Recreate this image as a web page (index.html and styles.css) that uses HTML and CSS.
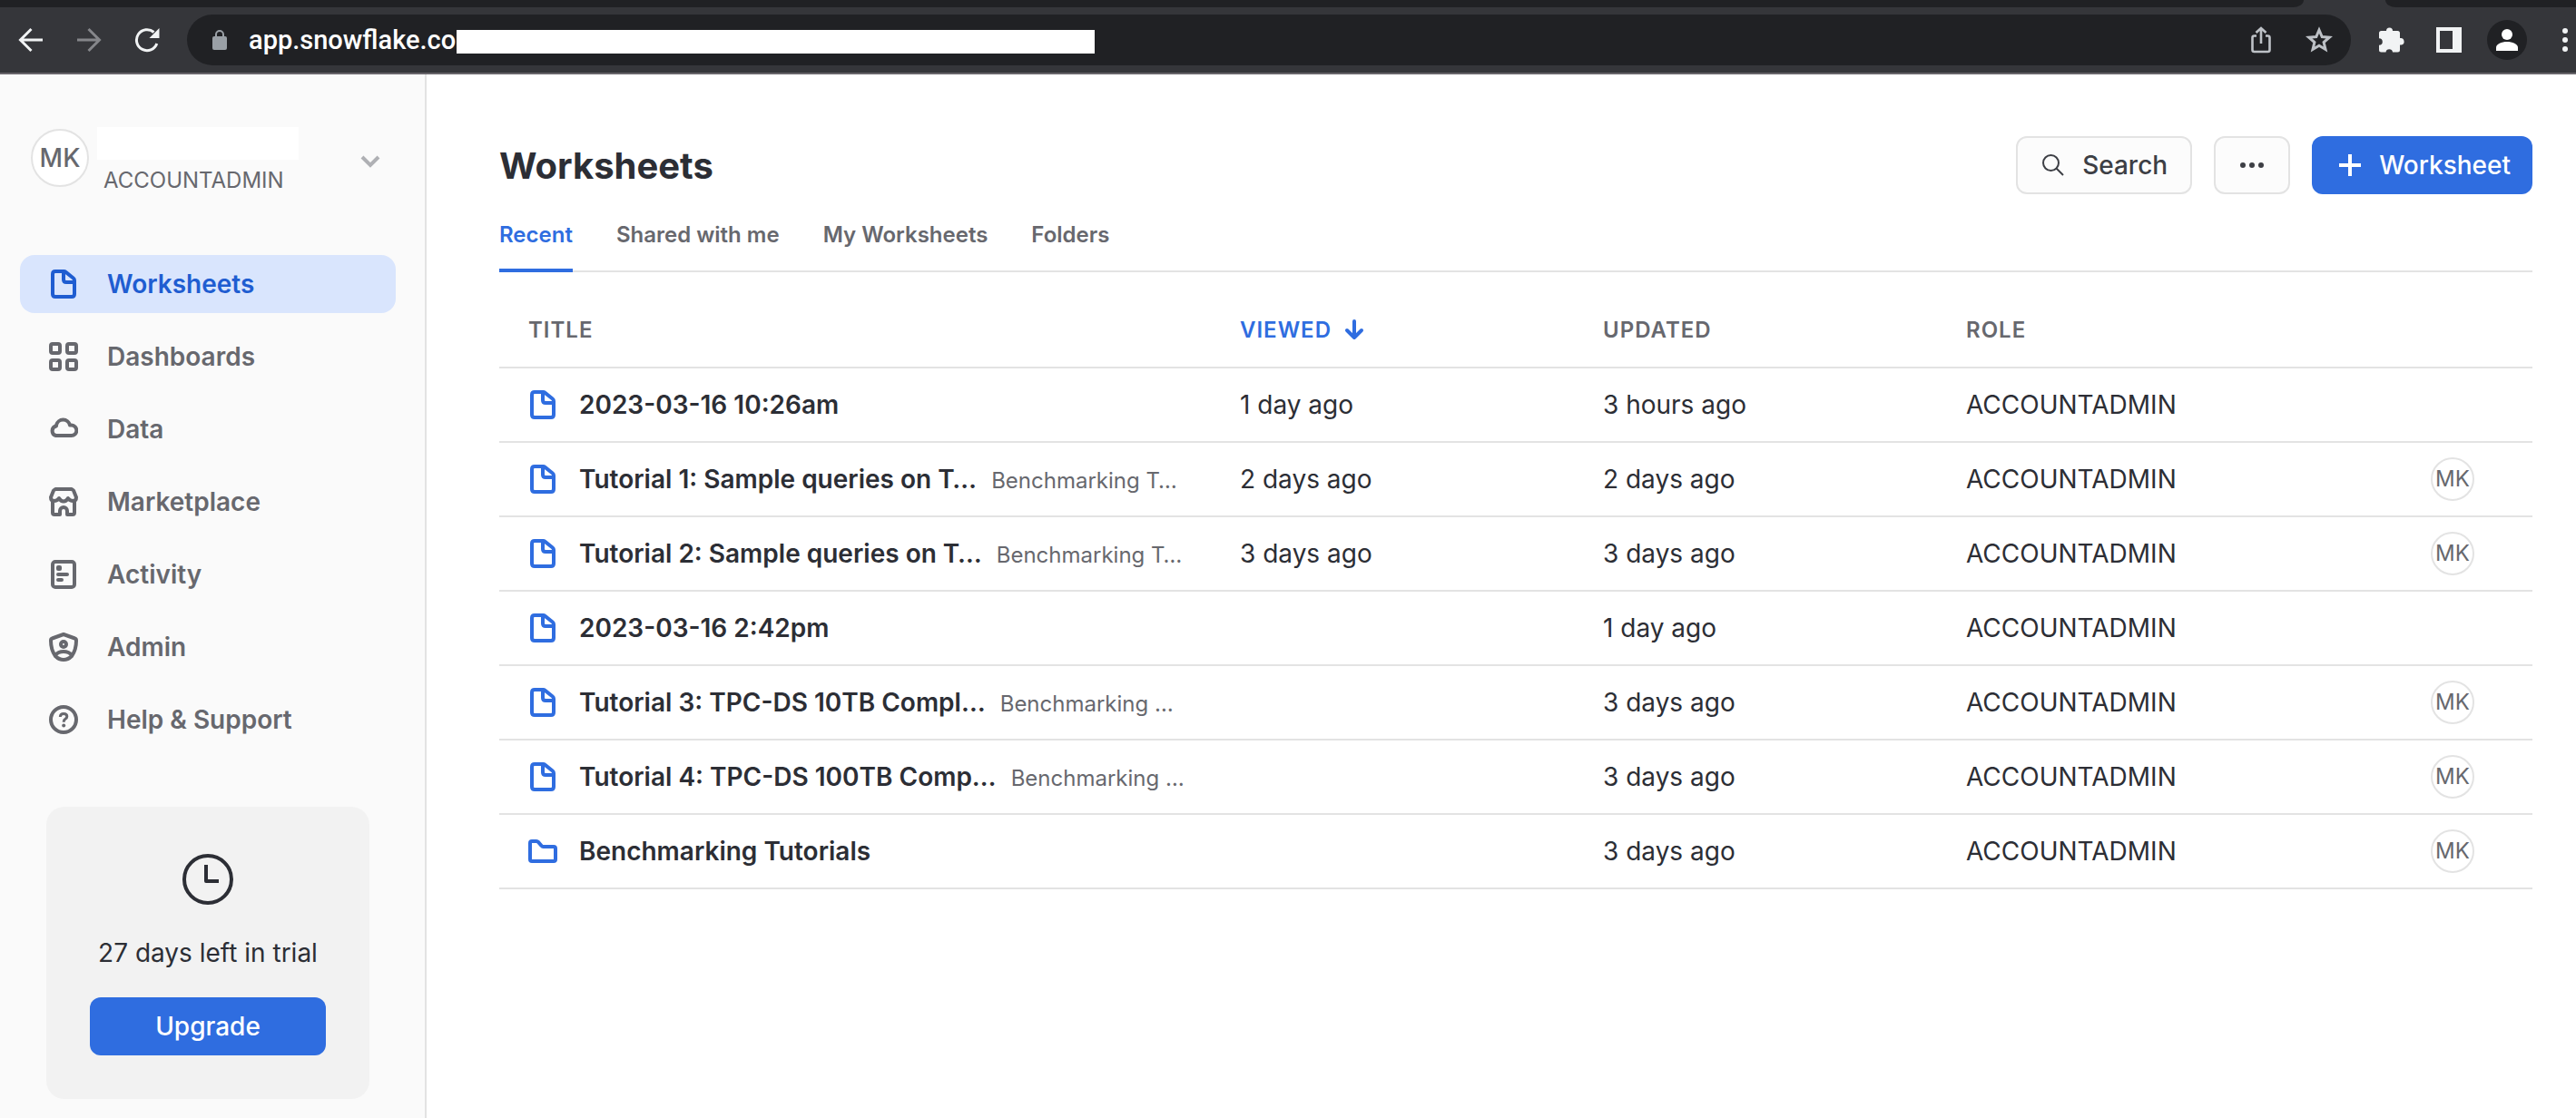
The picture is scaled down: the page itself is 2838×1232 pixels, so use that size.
FILE: index.html
```html
<!DOCTYPE html>
<html lang="en">
<head>
<meta charset="utf-8">
<title>Worksheets</title>
<link rel="stylesheet" href="styles.css">
</head>
<body>
<svg class="sprite" aria-hidden="true">
  <symbol id="file" viewBox="0 0 32 32">
    <path d="M7 2h9.500q1 0 1.700.6l8.600 6.900q1.200 1 1.200 2.500V27q0 3-3 3H7q-3 0-3-3V5q0-3 3-3zM16 2v9q0 3 3 3h9" fill="none" stroke="currentColor" stroke-width="4"/>
  </symbol>
  <symbol id="folder" viewBox="0 0 32 32">
    <path d="M4 5h5q1.200 0 2 .9l3.500 4q.8 1.100 2 1.100H28q2 0 2 2v12q0 2-2 2H4q-2 0-2-2V7q0-2 2-2z" fill="none" stroke="currentColor" stroke-width="4"/>
  </symbol>
</svg>

<header class="browser">
  <div class="tabstrip"><div class="tab-left"></div><div class="tab-right"></div></div>
  <div class="toolbar">
    <button class="tool back" aria-label="Back"><svg width="28" height="28" viewBox="0 0 28 28"><path d="M27 14H3M14.500 2 2.500 14l12 12" fill="none" stroke="currentColor" stroke-width="3"/></svg></button>
    <button class="tool forward" aria-label="Forward"><svg width="28" height="28" viewBox="0 0 28 28"><path d="M1 14h24M13.500 2l12 12-12 12" fill="none" stroke="currentColor" stroke-width="3"/></svg></button>
    <button class="tool reload" aria-label="Reload"><svg width="28" height="28" viewBox="0 0 28 28"><path d="M24.800 18A11.500 11.500 0 1 1 21.500 5.500" fill="none" stroke="currentColor" stroke-width="3"/><path d="M27.500 1v11h-11z" fill="currentColor"/></svg></button>
    <div class="omnibox">
      <svg class="lock" width="16" height="22" viewBox="0 0 16 22"><rect y="7" width="16" height="15" rx="2" fill="currentColor"/><path d="M4 8V5a4 4 0 0 1 8 0v3" fill="none" stroke="currentColor" stroke-width="2"/></svg>
      <span class="url">app.snowflake.co</span>
      <span class="url-mask"></span>
      <button class="tool share" aria-label="Share"><svg width="22" height="30" viewBox="0 0 22 30"><path d="M6 10.500H3.500a2 2 0 0 0-2 2V26a2 2 0 0 0 2 2h15a2 2 0 0 0 2-2V12.500a2 2 0 0 0-2-2H16M11 19V3M5.500 7 11 2l5.500 5" fill="none" stroke="currentColor" stroke-width="2.600"/></svg></button>
      <button class="tool star" aria-label="Bookmark"><svg width="30" height="30" viewBox="0 0 30 30"><path d="m15 4 3.200 7.500 8.100.7-6.200 5.300 1.900 8-7-4.200-7 4.200 1.900-8-6.200-5.300 8.100-.7z" fill="none" stroke="currentColor" stroke-width="3"/></svg></button>
    </div>
    <div class="extras">
      <button class="tool" aria-label="Extensions"><svg width="30" height="30" viewBox="0 0 30 30"><path d="M3.500 5H9a3.500 3.500 0 0 1 7 0h5.500a2.500 2.500 0 0 1 2.500 2.500V13a3.800 3.800 0 0 1 1.500 7.500H24v5.500a2.500 2.500 0 0 1-2.500 2.500H16a3.800 3.800 0 0 0-7.500 0h-5A2.500 2.500 0 0 1 1 26v-5.200a3.800 3.800 0 0 0 0-7.600V7.500A2.500 2.500 0 0 1 3.500 5z" fill="currentColor"/></svg></button>
      <button class="tool" aria-label="Side panel"><svg width="28" height="28" viewBox="0 0 28 28"><path d="M0 0h28v28H0zM4 4v20h14V4z" fill="currentColor" fill-rule="evenodd"/></svg></button>
      <button class="tool profile" aria-label="Profile"><svg width="24" height="24" viewBox="0 0 24 24"><circle cx="12" cy="6" r="6" fill="currentColor"/><path d="M0 24v-3.500C0 16.500 6 14 12 14s12 2.500 12 6.500V24z" fill="currentColor"/></svg></button>
      <button class="tool" aria-label="Menu"><svg width="6" height="26" viewBox="0 0 6 26"><g fill="currentColor"><circle cx="3" cy="3" r="3"/><circle cx="3" cy="13" r="3"/><circle cx="3" cy="23" r="3"/></g></svg></button>
    </div>
  </div>
</header>

<div class="app">
  <aside class="sidebar">
    <button class="account" aria-label="Account menu">
      <span class="avatar avatar-large">MK</span>
      <span class="account-text"><span class="account-name"></span><span class="account-role">ACCOUNTADMIN</span></span>
      <svg class="chevron" width="22" height="14" viewBox="0 0 22 14"><path d="m2 2 9 9 9-9" fill="none" stroke="currentColor" stroke-width="4"/></svg>
    </button>
    <nav class="nav">
      <a class="nav-item active" href="#"><svg width="32" height="32"><use href="#file"/></svg>Worksheets</a>
      <a class="nav-item" href="#"><svg width="32" height="32" viewBox="0 0 32 32"><g fill="none" stroke="currentColor" stroke-width="4"><rect x="2" y="2" width="10" height="10" rx="2"/><rect x="20" y="2" width="10" height="10" rx="2"/><rect x="2" y="20" width="10" height="10" rx="2"/><rect x="20" y="20" width="10" height="10" rx="2"/></g></svg>Dashboards</a>
      <a class="nav-item" href="#"><svg width="32" height="32" viewBox="0 0 32 32"><path d="M7.500 23h17a5.700 5.700 0 0 0 .3-11.400h-1.800A7.700 7.700 0 0 0 8 11.500v1a5.400 5.400 0 0 0-.5 10.500z" fill="none" stroke="currentColor" stroke-width="4" stroke-linejoin="round"/></svg>Data</a>
      <a class="nav-item" href="#"><svg width="32" height="32" viewBox="0 0 32 32"><path d="M4 15v13q0 2 2 2h6v-4a4 4 0 0 1 8 0v4h6q2 0 2-2V15M7 2h18l2 1.500L30 11q0 4-3.500 4-3.500 0-5.500-3-2 3.500-5 3.500t-5-3.500q-2 3-5.500 3Q2 15 2 11l3-7.500z" fill="none" stroke="currentColor" stroke-width="4" stroke-linejoin="round"/></svg>Marketplace</a>
      <a class="nav-item" href="#"><svg width="32" height="32" viewBox="0 0 32 32"><rect x="4" y="2" width="24" height="28" rx="3" fill="none" stroke="currentColor" stroke-width="4"/><rect x="8" y="6" width="6" height="6" rx="2" fill="currentColor"/><path d="M10 16h10M10 22h4" fill="none" stroke="currentColor" stroke-width="4" stroke-linecap="round"/></svg>Activity</a>
      <a class="nav-item" href="#"><svg width="32" height="32" viewBox="0 0 32 32"><g fill="none" stroke="currentColor" stroke-width="4" stroke-linejoin="round"><path d="M16 2 3.500 6.500Q2 7 2 9q0 10 5 17 4 4 9 4t9-4q5-7 5-17 0-2-1.500-2.500zM7 25q3-4 9-4t9 4"/><circle cx="16" cy="13" r="3"/></g></svg>Admin</a>
      <a class="nav-item" href="#"><svg width="32" height="32" viewBox="0 0 32 32"><circle cx="16" cy="16" r="14" fill="none" stroke="currentColor" stroke-width="4"/><path d="M12.300 13q.2-3.500 3.800-3.500 3.700 0 3.700 3 0 1.700-1.800 2.800-1.700 1-1.700 2.700v.8" fill="none" stroke="currentColor" stroke-width="3"/><circle cx="16.200" cy="22.500" r="2" fill="currentColor"/></svg>Help &amp; Support</a>
    </nav>
    <section class="trial">
      <svg width="56" height="56" viewBox="0 0 56 56"><circle cx="28" cy="28" r="26" fill="none" stroke="currentColor" stroke-width="4"/><path d="M26 12v18h14" fill="none" stroke="currentColor" stroke-width="4" stroke-linejoin="round"/></svg>
      <p>27 days left in trial</p>
      <button class="primary">Upgrade</button>
    </section>
  </aside>

  <main class="content">
    <div class="page-head">
      <h1>Worksheets</h1>
      <div class="actions">
        <button class="secondary"><svg width="24" height="24" viewBox="0 0 24 24"><circle cx="9.500" cy="9.500" r="8.500" fill="none" stroke="currentColor" stroke-width="2"/><path d="m15.500 15.500 7.500 7.500" stroke="currentColor" stroke-width="2"/></svg>Search</button>
        <button class="secondary more" aria-label="More"><svg width="26" height="6" viewBox="0 0 26 6"><g fill="currentColor"><circle cx="3" cy="3" r="3"/><circle cx="13" cy="3" r="3"/><circle cx="23" cy="3" r="3"/></g></svg></button>
        <button class="primary"><svg width="24" height="24" viewBox="0 0 24 24"><path d="M12 0v24M0 12h24" stroke="currentColor" stroke-width="4"/></svg>Worksheet</button>
      </div>
    </div>
    <nav class="tabs">
      <a class="tab active" href="#">Recent</a>
      <a class="tab" href="#">Shared with me</a>
      <a class="tab" href="#">My Worksheets</a>
      <a class="tab" href="#">Folders</a>
    </nav>
    <table class="list">
      <colgroup><col class="col-title"><col class="col-date"><col class="col-date"><col class="col-role"><col class="col-owner"></colgroup>
      <thead><tr><th>TITLE</th><th class="sorted"><span class="sort">VIEWED<svg width="22" height="24" viewBox="0 0 22 24"><path d="M11 2v18M3 12l8 8 8-8" fill="none" stroke="currentColor" stroke-width="4" stroke-linecap="round" stroke-linejoin="round"/></svg></span></th><th>UPDATED</th><th>ROLE</th><th></th></tr></thead>
      <tbody>
        <tr><td><div class="item"><svg width="32" height="32"><use href="#file"/></svg><a href="#">2023-03-16 10:26am</a></div></td><td>1 day ago</td><td>3 hours ago</td><td>ACCOUNTADMIN</td><td></td></tr>
        <tr><td><div class="item"><svg width="32" height="32"><use href="#file"/></svg><a href="#">Tutorial 1: Sample queries on T…</a><span class="parent">Benchmarking T…</span></div></td><td>2 days ago</td><td>2 days ago</td><td>ACCOUNTADMIN</td><td><span class="avatar">MK</span></td></tr>
        <tr><td><div class="item"><svg width="32" height="32"><use href="#file"/></svg><a href="#">Tutorial 2: Sample queries on T…</a><span class="parent">Benchmarking T…</span></div></td><td>3 days ago</td><td>3 days ago</td><td>ACCOUNTADMIN</td><td><span class="avatar">MK</span></td></tr>
        <tr><td><div class="item"><svg width="32" height="32"><use href="#file"/></svg><a href="#">2023-03-16 2:42pm</a></div></td><td></td><td>1 day ago</td><td>ACCOUNTADMIN</td><td></td></tr>
        <tr><td><div class="item"><svg width="32" height="32"><use href="#file"/></svg><a href="#">Tutorial 3: TPC-DS 10TB Compl…</a><span class="parent">Benchmarking …</span></div></td><td></td><td>3 days ago</td><td>ACCOUNTADMIN</td><td><span class="avatar">MK</span></td></tr>
        <tr><td><div class="item"><svg width="32" height="32"><use href="#file"/></svg><a href="#">Tutorial 4: TPC-DS 100TB Comp…</a><span class="parent">Benchmarking …</span></div></td><td></td><td>3 days ago</td><td>ACCOUNTADMIN</td><td><span class="avatar">MK</span></td></tr>
        <tr><td><div class="item"><svg width="32" height="32"><use href="#folder"/></svg><a href="#">Benchmarking Tutorials</a></div></td><td></td><td>3 days ago</td><td>ACCOUNTADMIN</td><td><span class="avatar">MK</span></td></tr>
      </tbody>
    </table>
  </main>
</div>
</body>
</html>
```
FILE: styles.css
```css
* { box-sizing: border-box; }

body {
  margin: 0;
  min-height: 100vh;
  display: flex;
  flex-direction: column;
  background: #fff;
  color: #2c2e35;
  font: 400 28px/32px Inter, "Liberation Sans", sans-serif;
}

a { color: inherit; text-decoration: none; }
button { margin: 0; padding: 0; border: 0; background: none; color: inherit; font: inherit; cursor: pointer; }
svg { display: block; flex: none; }
.sprite { position: absolute; width: 0; height: 0; }

/* Browser chrome */
.browser { background: #35363a; border-bottom: 2px solid #67646a; }
.tabstrip { display: flex; justify-content: space-between; gap: 90px; height: 8px; }
.tab-left { flex: 1; background: #202124; border-bottom-right-radius: 12px 8px; }
.tab-right { width: 210px; background: #202124; border-bottom-left-radius: 12px 8px; }
.toolbar { display: flex; align-items: center; height: 72px; padding: 0 9px 0 20px; color: #f1f3f4; }
.tool { display: flex; align-items: center; justify-content: center; }
.forward { margin-left: 36px; color: #85868a; }
.reload { margin-left: 36px; }
.omnibox { flex: 1; display: flex; align-items: center; height: 56px; margin: 0 30px; padding: 0 20px 0 28px; border-radius: 28px; background: #202124; }
.lock { color: #9aa0a6; }
.url { margin-left: 24px; color: #fff; font-family: Roboto, sans-serif; font-size: 29px; font-weight: 500; }
.url-mask { width: 703px; height: 26px; margin: 4px auto 0 1px; background: #fff; }
.share, .star { color: #bdc1c6; }
.share { margin-right: 38px; }
.extras { display: flex; align-items: center; }
.extras .tool + .tool { margin-left: 34px; }
.extras .profile.profile { width: 44px; height: 44px; margin: 0 5px 0 28px; border-radius: 50%; background: #202124; color: #fff; }

/* Sidebar */
.app { flex: 1; display: flex; }
.sidebar { flex: none; width: 470px; padding: 58px 32px 20px 22px; border-right: 2px solid #e3e3e3; background: #fafafa; color: #67686e; }
.account { display: flex; align-items: flex-start; width: 100%; height: 76px; padding: 0 17px 0 12px; text-align: left; }
.account .avatar { margin-top: 2px; }
.account-text { display: flex; flex-direction: column; flex: 1; margin-left: 9px; }
.account-name { width: 222px; height: 36px; background: #fff; }
.account-role { margin: 7px 0 0 7px; font-size: 24px; }
.chevron { margin-top: 31px; color: #afb0b4; }
.avatar { display: inline-flex; align-items: center; justify-content: center; width: 48px; height: 48px; border: 2px solid #e3e3e3; border-radius: 50%; background: #fff; color: #67686e; font-size: 24px; vertical-align: middle; }
.avatar-large { width: 64px; height: 64px; font-size: 28px; font-weight: 500; }
.nav { display: flex; flex-direction: column; gap: 16px; margin-top: 65px; }
.nav-item { display: flex; align-items: center; gap: 32px; height: 64px; padding: 0 32px; border-radius: 16px; font-weight: 600; }
.nav-item.active { background: #d9e5fd; color: #1f5dd1; }
.trial { display: flex; flex-direction: column; align-items: center; margin: 64px 29px 0; padding: 52px 48px 48px; border-radius: 20px; background: #f2f2f2; color: #2c2e35; }
.trial p { margin: 37px 0 33px; }
.trial .primary { width: 100%; }

/* Buttons */
.primary, .secondary { display: flex; align-items: center; justify-content: center; height: 64px; border-radius: 12px; }
.primary { background: #2f6de0; color: #fff; font-weight: 500; }
.secondary { border: 2px solid #e3e3e3; background: #fcfcfc; color: #3d3f45; font-weight: 500; }
.actions { display: flex; gap: 24px; }
.actions .primary { gap: 20px; padding: 0 24px 0 30px; }
.actions .secondary { gap: 20px; padding: 0 25px 0 27px; }
.actions .more { padding: 0 27px; }

/* Content */
.content { flex: 1; padding: 68px 48px 0 80px; }
.page-head { display: flex; align-items: center; justify-content: space-between; }
h1 { margin: 0; padding-top: 2px; font-size: 40px; line-height: 48px; font-weight: 700; }
.tabs { display: flex; gap: 48px; height: 86px; border-bottom: 2px solid #e3e3e3; color: #67686e; font-size: 24px; font-weight: 600; }
.tab { height: 86px; padding-top: 29px; }
.tab.active { border-bottom: 4px solid #2f6de0; color: #2f6de0; }
.list { width: 100%; margin-top: 24px; border-collapse: separate; border-spacing: 0; table-layout: fixed; }
.col-title { width: 816px; }
.col-date { width: 400px; }
.col-owner { width: 112px; }
.list th, .list td { height: 82px; padding: 0; border-bottom: 2px solid #e3e3e3; text-align: left; }
.list th { color: #67686e; font-size: 24px; font-weight: 600; letter-spacing: 1px; }
.list th.sorted { color: #2f6de0; }
.sort { display: flex; align-items: center; gap: 14px; }
.list th:first-child, .list td:first-child { padding-left: 32px; }
.item { display: flex; align-items: center; color: #2f6de0; white-space: nowrap; }
.item a { margin-left: 24px; color: #2c2e35; font-weight: 600; }
.parent { margin-left: 16px; padding-top: 4px; color: #67686e; font-size: 24px; }
```
